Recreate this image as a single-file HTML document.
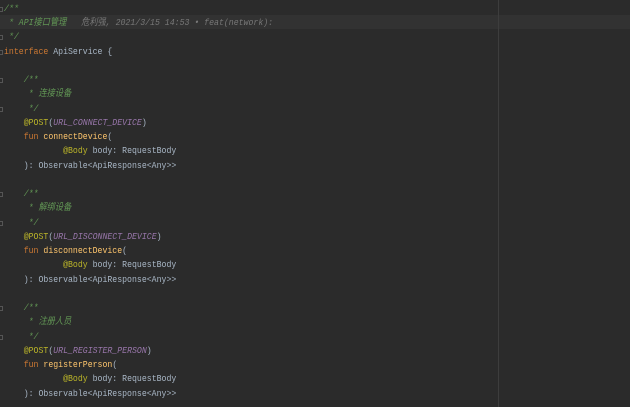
<!DOCTYPE html>
<html><head><meta charset="utf-8"><style>
html,body{margin:0;padding:0;width:630px;height:407px;overflow:hidden;background:#2b2b2b}
.ed{position:relative;width:630px;height:407px;font-family:"Liberation Mono","Noto Sans CJK SC",monospace;font-size:9.6px;color:#a9b7c6}
.l{position:absolute;left:4px;height:14px;line-height:14px;white-space:pre;transform:scaleX(0.855);transform-origin:0 0;margin-top:2px}
.hl{position:absolute;left:0;width:630px;top:15px;height:14px;background:#323232}
.vr{position:absolute;left:498px;top:0;width:1px;height:407px;background:#3d3d3d}
.c{color:#629755;font-style:italic}
.k{color:#cc7832}
.a{color:#bbb529}
.p{color:#9876aa;font-style:italic}
.f{color:#ffc66d}
.b{color:#787878;font-style:italic}
.g{position:absolute;left:0;width:3px;height:5px;border:1px solid #555;border-left:none;box-sizing:border-box;margin-top:2px}
</style></head><body><div class="ed">
<div class="hl"></div><div class="vr"></div>
<div class="l c" style="top:0">/**</div>
<div class="l" style="top:14px"><span class="c"> * API接口管理</span>   <span class="b">危利强, 2021/3/15 14:53 • feat(network):</span></div>
<div class="l c" style="top:28px"> */</div>
<div class="l" style="top:43px"><span class="k">interface</span> ApiService {</div>
<div class="l c" style="top:71px">    /**</div>
<div class="l c" style="top:85px">     * 连接设备</div>
<div class="l c" style="top:100px">     */</div>
<div class="l" style="top:114px">    <span class="a">@POST</span>(<span class="p">URL_CONNECT_DEVICE</span>)</div>
<div class="l" style="top:128px">    <span class="k">fun</span> <span class="f">connectDevice</span>(</div>
<div class="l" style="top:142px">            <span class="a">@Body</span> body: RequestBody</div>
<div class="l" style="top:157px">    ): Observable&lt;ApiResponse&lt;Any&gt;&gt;</div>
<div class="l c" style="top:185px">    /**</div>
<div class="l c" style="top:199px">     * 解绑设备</div>
<div class="l c" style="top:214px">     */</div>
<div class="l" style="top:228px">    <span class="a">@POST</span>(<span class="p">URL_DISCONNECT_DEVICE</span>)</div>
<div class="l" style="top:242px">    <span class="k">fun</span> <span class="f">disconnectDevice</span>(</div>
<div class="l" style="top:256px">            <span class="a">@Body</span> body: RequestBody</div>
<div class="l" style="top:271px">    ): Observable&lt;ApiResponse&lt;Any&gt;&gt;</div>
<div class="l c" style="top:299px">    /**</div>
<div class="l c" style="top:313px">     * 注册人员</div>
<div class="l c" style="top:328px">     */</div>
<div class="l" style="top:342px">    <span class="a">@POST</span>(<span class="p">URL_REGISTER_PERSON</span>)</div>
<div class="l" style="top:356px">    <span class="k">fun</span> <span class="f">registerPerson</span>(</div>
<div class="l" style="top:370px">            <span class="a">@Body</span> body: RequestBody</div>
<div class="l" style="top:385px">    ): Observable&lt;ApiResponse&lt;Any&gt;&gt;</div>
<div class="g" style="top:5px"></div><div class="g" style="top:33px"></div><div class="g" style="top:48px"></div>
<div class="g" style="top:76px"></div><div class="g" style="top:105px"></div>
<div class="g" style="top:190px"></div><div class="g" style="top:219px"></div>
<div class="g" style="top:304px"></div><div class="g" style="top:333px"></div>
</div></body></html>
